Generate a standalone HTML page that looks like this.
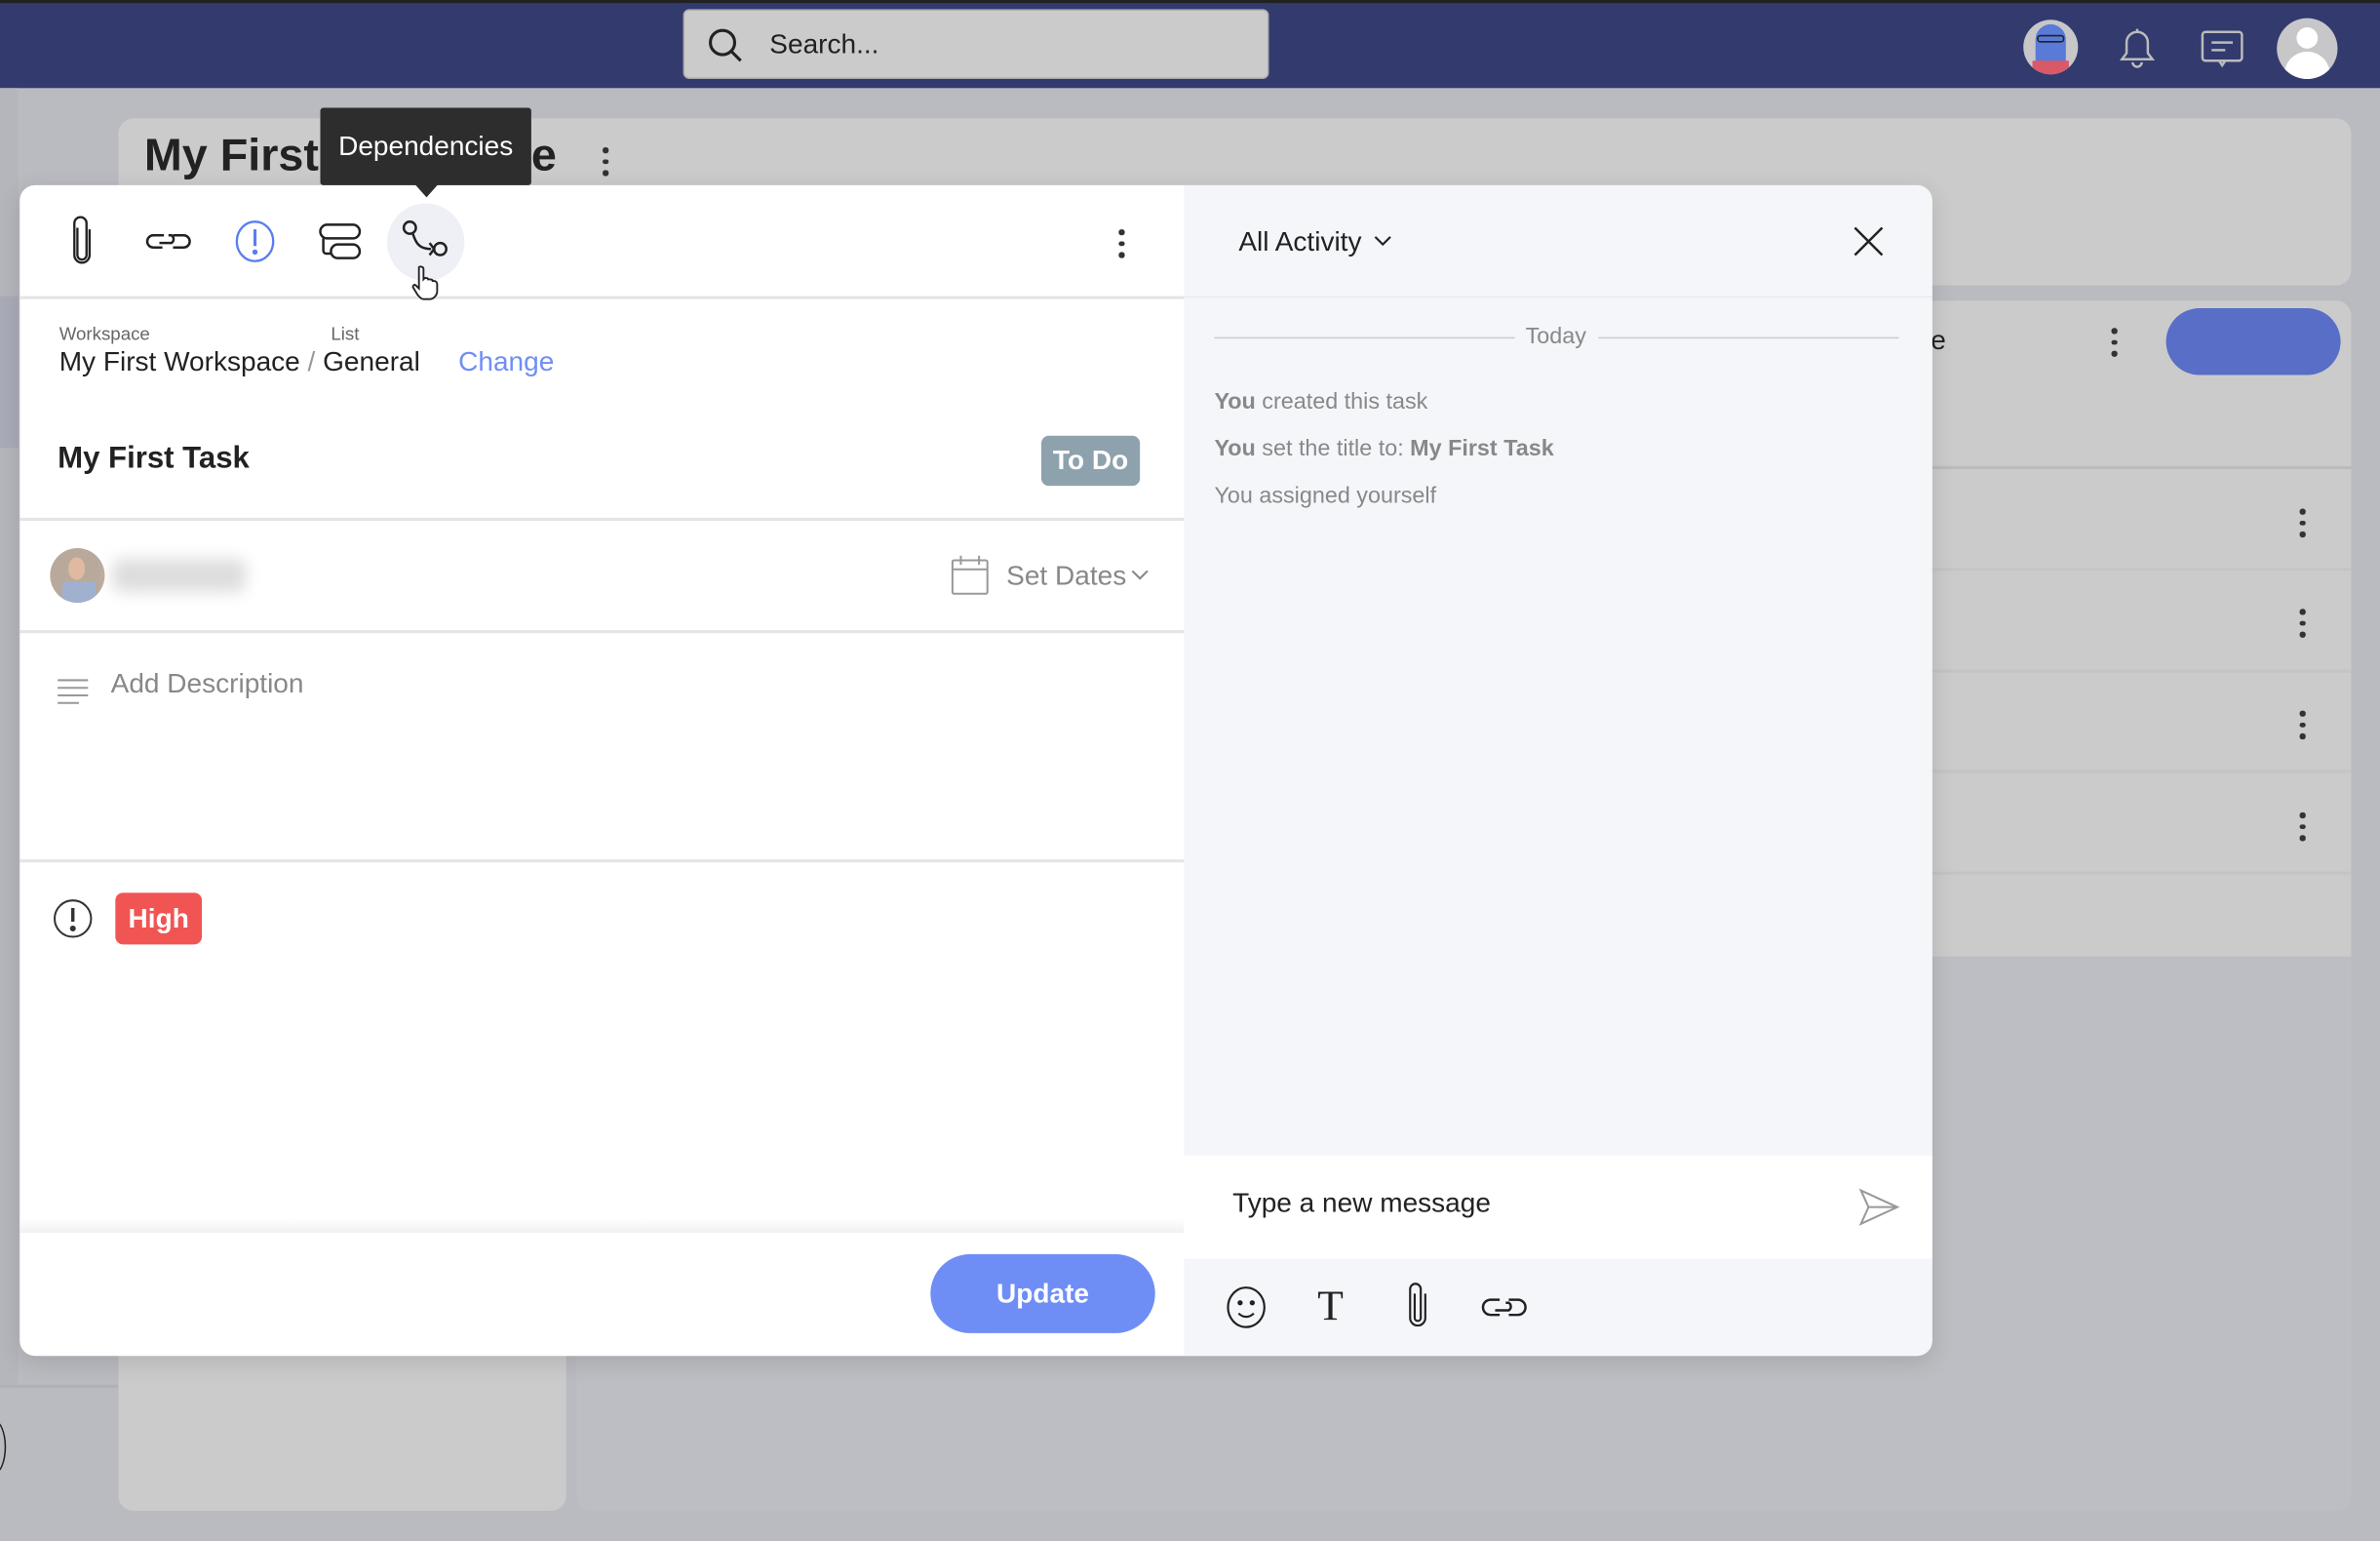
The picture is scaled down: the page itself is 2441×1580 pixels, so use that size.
<!DOCTYPE html>
<html><head><meta charset="utf-8"><style>
*{box-sizing:border-box;margin:0;padding:0}
html,body{width:2441px;height:1580px;overflow:hidden;background:#babbc0;font-family:"Liberation Sans",sans-serif}
#s{position:absolute;left:0;top:0;width:1568px;height:1015px;transform:scale(1.5568);transform-origin:0 0;background:#babbc0}
.a{position:absolute}
.dots{position:absolute;width:4px}
.dots i{display:block;width:3.5px;height:3.5px;border-radius:50%;background:#333;margin-bottom:4px}
</style></head><body><div id="s">
<!-- header -->
<div class="a" style="left:0;top:0;width:1568px;height:58px;background:#323a6e;border-top:2px solid #222"></div>
<div class="a" style="left:450px;top:6px;width:386px;height:46px;background:#cbcbcb;border-radius:4px;border:1px solid #aaa"></div>
<svg class="a" style="left:466px;top:18px" width="24" height="24" viewBox="0 0 24 24" fill="none" stroke="#222" stroke-width="2"><circle cx="10" cy="10" r="8"/><path d="M16 16l6 6"/></svg>
<div class="a" style="left:507px;top:19px;font-size:18px;color:#222">Search...</div>
<div class="a" style="left:1333px;top:13px;width:36px;height:36px;border-radius:50%;background:#c7c7c9;overflow:hidden"><div style="position:absolute;left:8px;top:3px;width:20px;height:30px;background:#5a7ad8;border-radius:10px 10px 0 0"></div><div style="position:absolute;left:6px;top:27px;width:24px;height:12px;background:#d95968"></div><div style="position:absolute;left:9px;top:10px;width:18px;height:5px;border:1.5px solid #222;border-radius:2px"></div></div>
<svg class="a" style="left:1393px;top:16px" width="30" height="30" viewBox="0 0 30 30" fill="none" stroke="#bbb" stroke-width="1.6"><path d="M5 23h20l-3-4v-7a7 7 0 0 0-14 0v7z"/><path d="M12 25a3 3 0 0 0 6 0"/><path d="M15 3v2"/></svg>
<svg class="a" style="left:1449px;top:18px" width="30" height="30" viewBox="0 0 30 30" fill="none" stroke="#bbb" stroke-width="1.6"><rect x="2" y="3" width="26" height="19" rx="2"/><path d="M13 22l2 3 2-3M8 10h14M8 15h9"/></svg>
<div class="a" style="left:1500px;top:12px;width:40px;height:40px;border-radius:50%;background:#c7c7c9;overflow:hidden"><div style="position:absolute;left:13px;top:6px;width:14px;height:14px;border-radius:50%;background:#fff"></div><div style="position:absolute;left:5px;top:22px;width:30px;height:20px;border-radius:15px 15px 4px 4px;background:#fff"></div></div>
<!-- background page -->
<div class="a" style="left:78px;top:78px;width:1471px;height:110px;background:#cbcbcb;border-radius:10px"></div>
<div class="a" style="left:95px;top:86px;font-size:30px;font-weight:bold;color:#222">My First</div>
<div class="a" style="left:350px;top:86px;font-size:30px;font-weight:bold;color:#222">e</div>
<div class="dots" style="left:397px;top:97px"><i></i><i></i><i></i></div>
<div class="a" style="left:0;top:58px;width:12px;height:854px;background:#b5b6bb"></div>
<div class="a" style="left:0;top:195px;width:12px;height:100px;background:#a9acb8"></div>
<div class="a" style="left:0;top:912px;width:78px;height:2px;background:#b0b1b6"></div>
<div class="a" style="left:78px;top:880px;width:295px;height:115px;background:#cbcbcb;border-radius:0 0 10px 10px"></div>
<div class="a" style="left:380px;top:198px;width:1169px;height:797px;background:#bdbec3;border-radius:10px"></div>
<div class="a" style="left:380px;top:198px;width:1169px;height:432px;background:#cbcbcb;border-radius:10px 10px 0 0"></div>
<div class="a" style="left:1272px;top:214px;font-size:18px;color:#222">e</div>
<div class="dots" style="left:1391px;top:216px"><i></i><i></i><i></i></div>
<div class="a" style="left:1427px;top:203px;width:115px;height:44px;border-radius:22px;background:#596ec7"></div>
<div class="a" style="left:1272px;top:307px;width:277px;height:2px;background:#bbb"></div>
<div class="a" style="left:1272px;top:374px;width:277px;height:2px;background:#c4c4c4"></div>
<div class="a" style="left:1272px;top:441px;width:277px;height:2px;background:#c4c4c4"></div>
<div class="a" style="left:1272px;top:507px;width:277px;height:2px;background:#c4c4c4"></div>
<div class="a" style="left:1272px;top:574px;width:277px;height:2px;background:#c4c4c4"></div>
<div class="dots" style="left:1515px;top:335px"><i></i><i></i><i></i></div>
<div class="dots" style="left:1515px;top:401px"><i></i><i></i><i></i></div>
<div class="dots" style="left:1515px;top:468px"><i></i><i></i><i></i></div>
<div class="dots" style="left:1515px;top:535px"><i></i><i></i><i></i></div>
<div class="a" style="left:-12px;top:935px;width:16px;height:36px;border:1.5px solid #222;border-radius:50%"></div>
<!-- modal -->
<div class="a" style="left:13px;top:122px;width:1260px;height:771px;background:#fff;border-radius:10px;box-shadow:0 4px 16px rgba(0,0,0,.12);overflow:hidden">
 <div class="a" style="left:767px;top:0;width:493px;height:771px;background:#f5f6fa"></div>
 <div class="a" style="left:0;top:73px;width:767px;height:1.5px;background:#e4e4e4"></div>
 <div class="a" style="left:767px;top:73px;width:493px;height:1px;background:#e9e9ee"></div>
 <div class="a" style="left:0;top:219px;width:767px;height:1.5px;background:#e4e4e4"></div>
 <div class="a" style="left:0;top:293px;width:767px;height:1.5px;background:#e4e4e4"></div>
 <div class="a" style="left:0;top:444px;width:767px;height:1.5px;background:#e4e4e4"></div>
 <div class="a" style="left:0;top:680px;width:767px;height:10px;background:linear-gradient(#fff,#f1f1f1)"></div>
 <div class="a" style="left:767px;top:639px;width:493px;height:68px;background:#fff"></div>
</div>
<!-- toolbar icons -->
<svg class="a" style="left:44px;top:142px" width="20" height="34" viewBox="0 0 20 34" fill="none" stroke="#222" stroke-width="1.5"><path d="M7 8v18a3 3 0 0 0 6 0V5a4 4 0 0 0-8 0v21a5 5 0 0 0 10 0V9"/></svg>
<svg class="a" style="left:95px;top:148px" width="32" height="22" viewBox="0 0 32 22" fill="none" stroke="#222" stroke-width="1.6"><path d="M13 7H6a4 4 0 0 0 0 8h6"/><path d="M19 7h7a4 4 0 0 1 0 8h-7"/><path d="M10 12h8a3 3 0 0 0 0-5h-2"/></svg>
<svg class="a" style="left:153px;top:144px" width="30" height="30" viewBox="0 0 30 30" fill="none" stroke="#5a7ef0" stroke-width="1.5"><ellipse cx="15" cy="15" rx="12" ry="13"/><path d="M15 7v11" stroke-width="2"/><circle cx="15" cy="22" r="1" fill="#5a7ef0"/></svg>
<svg class="a" style="left:208px;top:145px" width="32" height="30" viewBox="0 0 32 30" fill="none" stroke="#222" stroke-width="1.6"><rect x="3" y="3" width="26" height="9" rx="4.5"/><rect x="10" y="16" width="19" height="9" rx="4.5"/><path d="M5 12v8a2 2 0 0 0 2 2h3"/></svg>
<div class="a" style="left:255px;top:134px;width:51px;height:51px;border-radius:50%;background:#eef0f5"></div>
<svg class="a" style="left:262px;top:142px" width="36" height="36" viewBox="0 0 36 36" fill="none" stroke="#222" stroke-width="1.6"><circle cx="8" cy="8" r="4"/><path d="M10 12c2 6 4 10 12 10"/><circle cx="28" cy="22" r="4"/><path d="M21 18l3 4-3 4"/></svg>
<svg class="a" style="left:270px;top:174px" width="22" height="24" viewBox="0 0 22 24"><path d="M6 2c1-1 3 0 3 1v7l1-1c1 0 2 0 2 1l1 0c1 0 2 0 2 1h1c1 0 2 1 2 2v5c0 2-2 5-5 5H9c-2 0-3-2-4-3l-3-5c0-1 1-2 2-1l2 2V3z" fill="#fff" stroke="#222" stroke-width="1.2"/></svg>
<div class="dots" style="left:737px;top:151px"><i></i><i></i><i></i></div>
<!-- tooltip -->
<div class="a" style="left:211px;top:71px;width:139px;height:51px;background:#2d2d2d;border-radius:2px;color:#fff;font-size:18px;text-align:center;line-height:51px">Dependencies</div>
<div class="a" style="left:273px;top:121px;width:0;height:0;border-left:8px solid transparent;border-right:8px solid transparent;border-top:9px solid #2d2d2d"></div>
<!-- workspace -->
<div class="a" style="left:39px;top:213px;font-size:12px;color:#666">Workspace</div>
<div class="a" style="left:218px;top:213px;font-size:12px;color:#666">List</div>
<div class="a" style="left:39px;top:228px;font-size:18px;color:#222">My First Workspace <span style="color:#999">/</span> General</div>
<div class="a" style="left:302px;top:228px;font-size:18px;color:#6f8ef5">Change</div>
<div class="a" style="left:38px;top:291px;font-size:20px;font-weight:bold;color:#222">My First Task</div>
<div class="a" style="left:686px;top:287px;width:65px;height:33px;background:#8ea2ad;border-radius:5px;color:#fff;font-size:18px;font-weight:bold;text-align:center;line-height:33px">To Do</div>
<!-- assignee -->
<div class="a" style="left:33px;top:361px;width:36px;height:36px;border-radius:50%;background:#b9a99c;overflow:hidden"><div style="position:absolute;left:8px;top:22px;width:22px;height:16px;background:#9fb1cf"></div><div style="position:absolute;left:12px;top:6px;width:11px;height:15px;border-radius:50%;background:#e0b9a0"></div></div>
<div class="a" style="left:74px;top:368px;width:88px;height:22px;background:#ddd;filter:blur(5px);border-radius:6px"></div>
<svg class="a" style="left:626px;top:365px" width="26" height="28" viewBox="0 0 26 28" fill="none" stroke="#999" stroke-width="1.3"><rect x="1.5" y="4" width="23" height="22" rx="1"/><path d="M1.5 10h23M7 1v6M19 1v6"/></svg>
<div class="a" style="left:663px;top:369px;font-size:18px;color:#888">Set Dates</div>
<svg class="a" style="left:745px;top:374px" width="12" height="10" viewBox="0 0 12 10" fill="none" stroke="#888" stroke-width="1.3"><path d="M1 2l5 5 5-5"/></svg>
<!-- description -->
<svg class="a" style="left:37px;top:446px" width="22" height="20" viewBox="0 0 22 20" stroke="#999" stroke-width="1.3"><path d="M1 2h20M1 7h20M1 12h20M1 17h14"/></svg>
<div class="a" style="left:73px;top:440px;font-size:18px;color:#888">Add Description</div>
<!-- priority -->
<svg class="a" style="left:35px;top:592px" width="26" height="26" viewBox="0 0 26 26" fill="none" stroke="#333" stroke-width="1.3"><circle cx="13" cy="13" r="12"/><path d="M13 6v9" stroke-width="2.2"/><circle cx="13" cy="19.5" r="1.3" fill="#333"/></svg>
<div class="a" style="left:76px;top:588px;width:57px;height:34px;background:#f05553;border-radius:5px;color:#fff;font-size:18px;font-weight:bold;text-align:center;line-height:34px">High</div>
<!-- update -->
<div class="a" style="left:613px;top:826px;width:148px;height:52px;background:#6f8ef5;border-radius:26px;color:#fff;font-size:18px;font-weight:bold;text-align:center;line-height:52px">Update</div>
<!-- right panel -->
<div class="a" style="left:816px;top:149px;font-size:18px;color:#222">All Activity</div>
<svg class="a" style="left:904px;top:154px" width="14" height="10" viewBox="0 0 14 10" fill="none" stroke="#222" stroke-width="1.4"><path d="M2 2l5 5 5-5"/></svg>
<svg class="a" style="left:1219px;top:147px" width="24" height="24" viewBox="0 0 24 24" stroke="#222" stroke-width="1.6"><path d="M3 3l18 18M21 3L3 21"/></svg>
<div class="a" style="left:800px;top:222px;width:198px;height:1px;background:#ccc"></div>
<div class="a" style="left:1053px;top:222px;width:198px;height:1px;background:#ccc"></div>
<div class="a" style="left:1005px;top:213px;font-size:15px;color:#888">Today</div>
<div class="a" style="left:800px;top:256px;font-size:15px;color:#888"><b>You</b> created this task</div>
<div class="a" style="left:800px;top:287px;font-size:15px;color:#888"><b>You</b> set the title to: <b>My First Task</b></div>
<div class="a" style="left:800px;top:318px;font-size:15px;color:#888">You assigned yourself</div>
<div class="a" style="left:812px;top:782px;font-size:18px;color:#222">Type a new message</div>
<svg class="a" style="left:1224px;top:781px" width="28" height="28" viewBox="0 0 28 28" fill="none" stroke="#999" stroke-width="1.3"><path d="M2 3l24 11L2 25l5-11z M7 14h19"/></svg>
<svg class="a" style="left:807px;top:846px" width="28" height="30" viewBox="0 0 28 30" fill="none" stroke="#222" stroke-width="1.4"><ellipse cx="14" cy="15" rx="12" ry="13"/><circle cx="10" cy="12" r="1" fill="#222"/><circle cx="18" cy="12" r="1" fill="#222"/><path d="M9 19c3 3 7 3 10 0"/></svg>
<div class="a" style="left:868px;top:845px;font-family:'Liberation Serif',serif;font-size:28px;color:#222">T</div>
<svg class="a" style="left:925px;top:844px" width="18" height="32" viewBox="0 0 18 32" fill="none" stroke="#222" stroke-width="1.4"><path d="M7 8v16a2 2 0 0 0 4 0V5a3.5 3.5 0 0 0-7 0v19a5 5 0 0 0 10 0V8"/></svg>
<svg class="a" style="left:975px;top:852px" width="32" height="18" viewBox="0 0 32 18" fill="none" stroke="#222" stroke-width="1.6"><path d="M13 4H7a5 5 0 0 0 0 10h6"/><path d="M19 4h6a5 5 0 0 1 0 10h-6"/><path d="M10 11h9a3 3 0 0 0 0-5h-2"/></svg>
</div></body></html>
